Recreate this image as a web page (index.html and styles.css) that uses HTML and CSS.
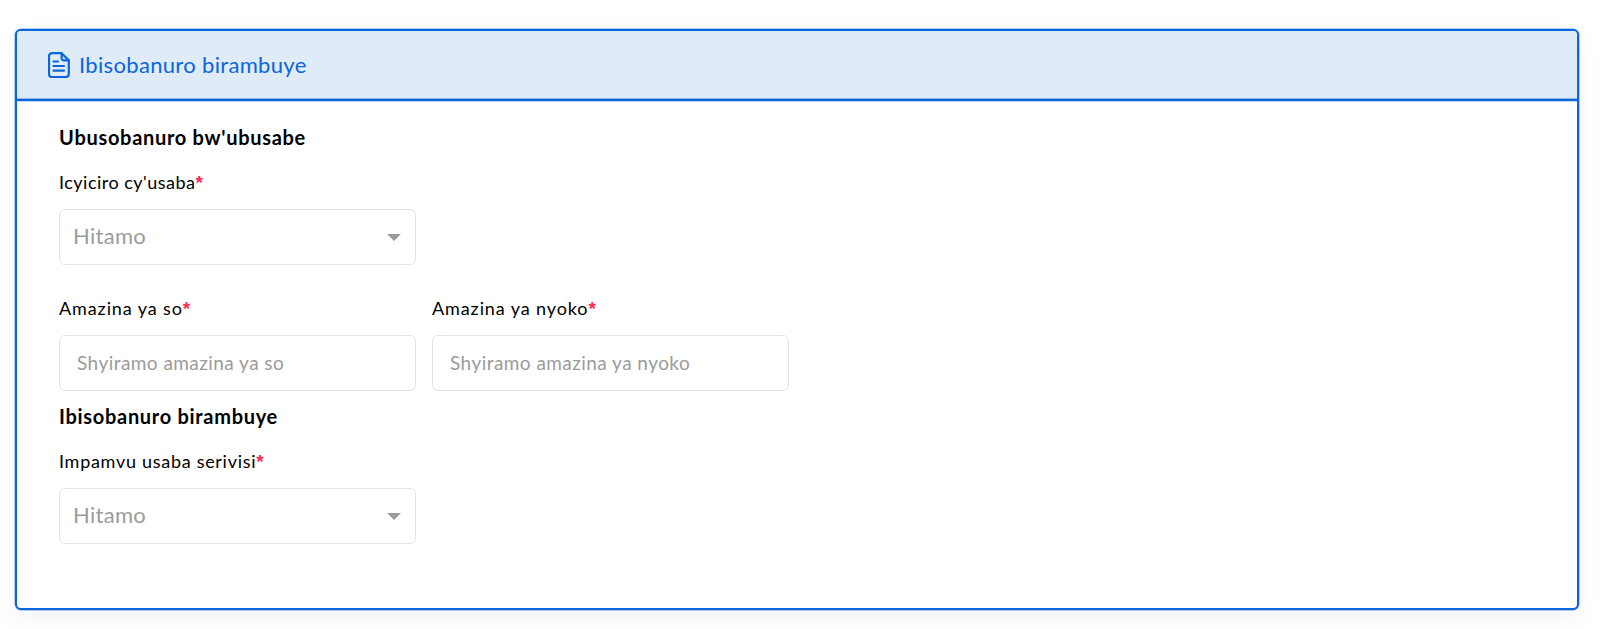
FILE: index.html
```html
<!DOCTYPE html>
<html lang="rw">
<head>
<meta charset="utf-8">
<title>Ibisobanuro birambuye</title>
<link rel="stylesheet" href="styles.css">
</head>
<body>
<section class="card">
  <header class="card-header">
    <svg class="doc-icon" width="22" height="26" viewBox="0 0 22 26" fill="none" stroke="currentColor" stroke-width="2.2" stroke-linejoin="round" stroke-linecap="round">
      <path d="M4 1.2h9.6L20.8 8.4V22a3 3 0 0 1-3 3H4a3 3 0 0 1-3-3V4.200a3 3 0 0 1 3-3z"/>
      <path d="M13.600 1.200V6a2.400 2.400 0 0 0 2.400 2.400h4.800"/>
      <path d="M5.500 9.500h4.500M5.500 14h10.500M5.500 18.700h10.500"/>
    </svg>
    <h2 class="card-title">Ibisobanuro birambuye</h2>
  </header>
  <div class="card-body">
    <h3 class="section-title">Ubusobanuro bw'ubusabe</h3>
    <div class="field field-select">
      <label class="label">Icyiciro cy'usaba<span class="req">*</span></label>
      <div class="control select"><span class="select-value">Hitamo</span><span class="caret"></span></div>
    </div>
    <div class="row">
      <div class="field">
        <label class="label label-wide" for="father">Amazina ya so<span class="req">*</span></label>
        <input class="control input" id="father" type="text" placeholder="Shyiramo amazina ya so">
      </div>
      <div class="field">
        <label class="label label-wide" for="mother">Amazina ya nyoko<span class="req">*</span></label>
        <input class="control input" id="mother" type="text" placeholder="Shyiramo amazina ya nyoko">
      </div>
    </div>
    <h3 class="section-title section-two">Ibisobanuro birambuye</h3>
    <div class="field field-select">
      <label class="label label-mid">Impamvu usaba serivisi<span class="req">*</span></label>
      <div class="control select"><span class="select-value">Hitamo</span><span class="caret"></span></div>
    </div>
  </div>
</section>
</body>
</html>
```

FILE: styles.css
```css
* { box-sizing: border-box; }
html, body { margin: 0; height: 100%; background: #fff; }
body {
  padding: 29px 21px 19px 15px;
  font-family: "Lato", "Liberation Sans", sans-serif;
  color: #000;
  overflow: hidden;
}
.card {
  height: 581px;
  border: 2px solid #0a66dc;
  border-radius: 6px;
  box-shadow: 0 0 0 0.5px rgba(10, 102, 220, 0.6), 0 8px 24px rgba(0, 0, 0, 0.05);
  background: #fff;
}
.card-header {
  display: flex;
  align-items: center;
  gap: 9px;
  height: 70px;
  padding: 0 0 1px 31px;
  background: #e0ebf8;
  border-bottom: 2px solid #0a66dc;
  box-shadow: 0 1px 0 rgba(10, 102, 220, 0.25), inset 0 -1px 0 rgba(10, 102, 220, 0.4);
  border-radius: 4px 4px 0 0;
  color: #0a66dc;
}
.doc-icon { flex: none; }
.card-title { margin: 0; font-size: 22px; font-weight: 400; letter-spacing: 0.33px; }
.card-body { padding: 24px 42px 0; }
.section-title { margin: 0; font-size: 20px; font-weight: 700; line-height: 24px; letter-spacing: 0.7px; }
.section-two { margin-top: 13px; }
.field { width: 357px; }
.field-select { margin-top: 21px; }
.label { display: block; font-size: 18px; line-height: 24px; letter-spacing: 0.48px; }
.label-wide { letter-spacing: 0.9px; }
.label-mid { letter-spacing: 0.71px; }
.req { color: #ff2a55; font-family: "Liberation Sans", sans-serif; font-size: 19px; font-weight: 700; line-height: 1; letter-spacing: 0; }
.row { display: flex; gap: 16px; margin-top: 31px; }
.control {
  display: flex;
  align-items: center;
  width: 100%;
  height: 56px;
  margin-top: 15px;
  border: 1px solid #dfe3e8;
  border-radius: 6px;
  background: #fff;
}
.select { padding: 0 14px 3px 14px; justify-content: space-between; }
.select-value { font-size: 22px; color: #9b9b9b; letter-spacing: 0.3px; margin-left: -1px; }
.caret {
  width: 0;
  height: 0;
  margin-top: 3px;
  border-left: 7px solid transparent;
  border-right: 7px solid transparent;
  border-top: 7px solid #9b9b9b;
}
.input {
  padding: 0 16px 2px 17px;
  font: inherit;
  font-size: 19px;
  letter-spacing: 0.45px;
  color: #333;
  outline: none;
}
.input::placeholder { color: #9b9b9b; opacity: 1; }
```
